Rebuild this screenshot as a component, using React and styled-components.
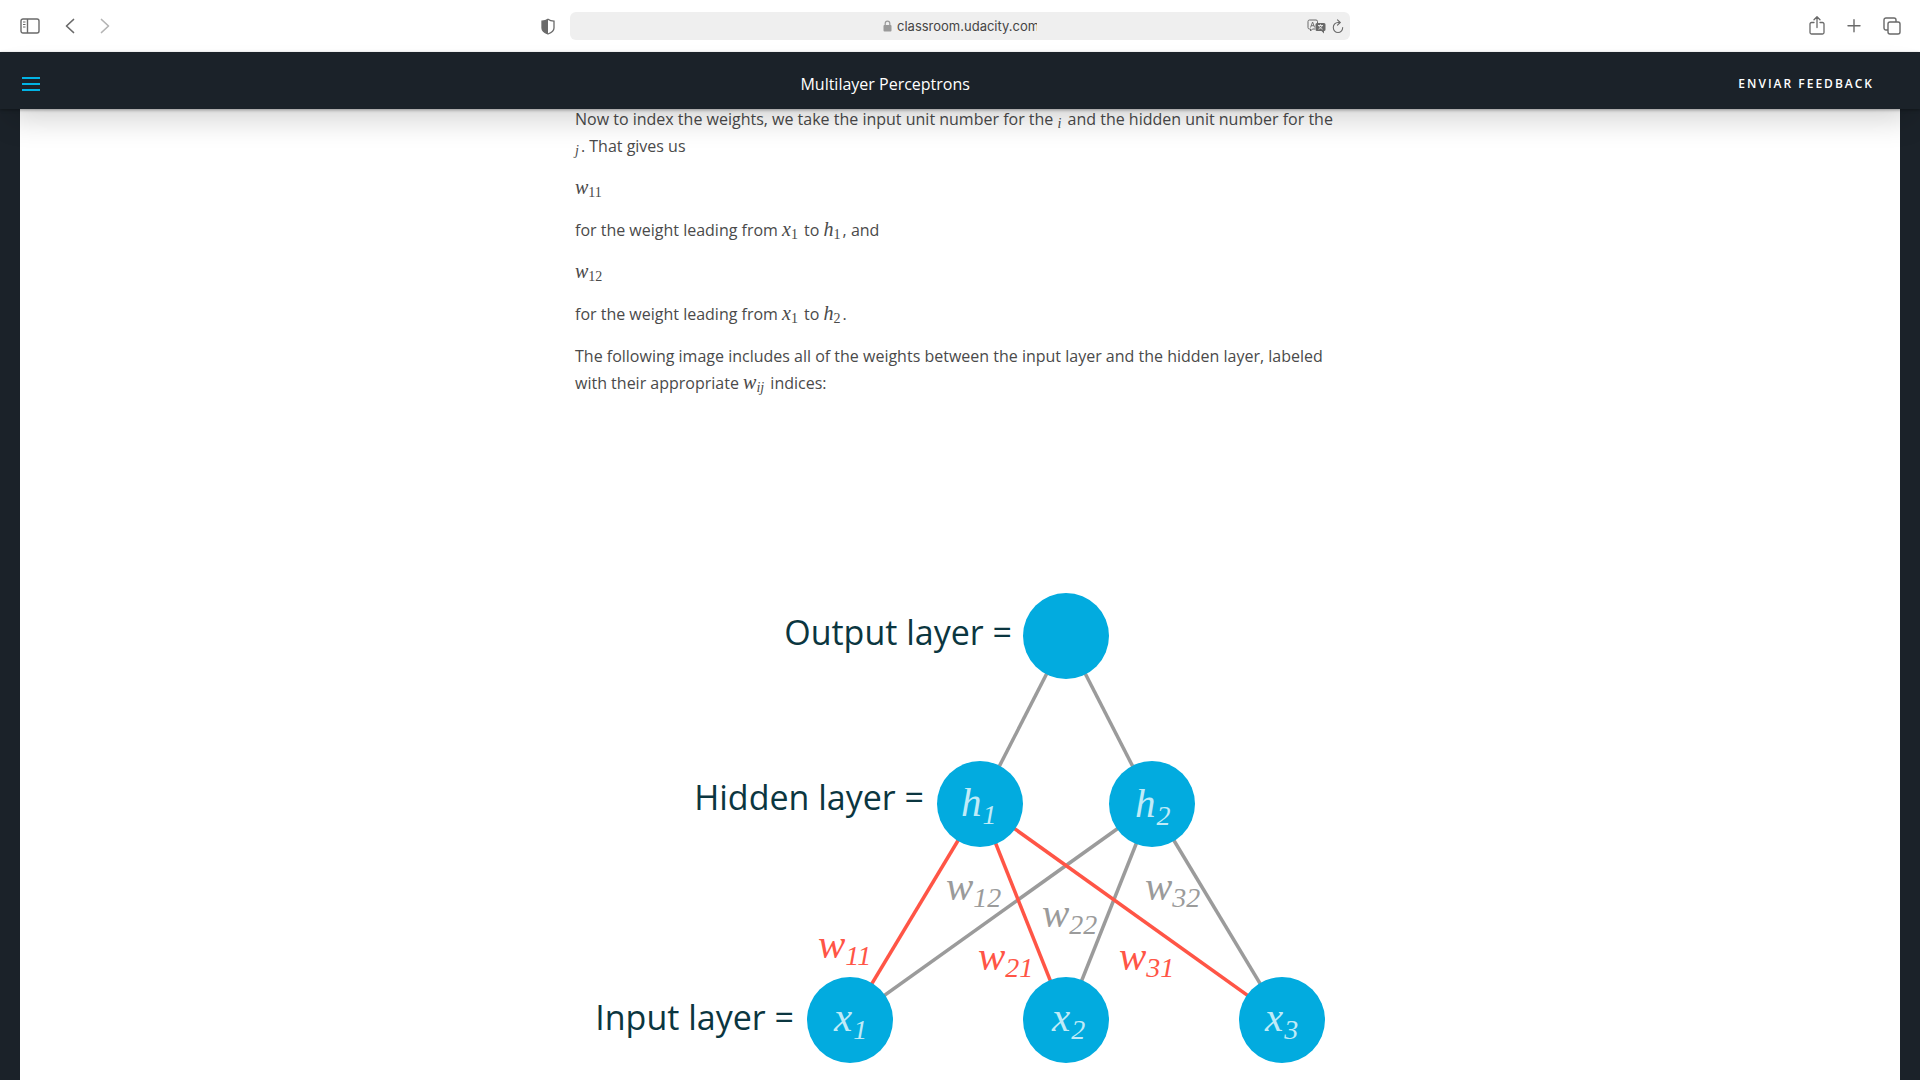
import React from "react";
import styled, { createGlobalStyle } from "styled-components";

const GlobalStyle = createGlobalStyle`
  *, *::before, *::after { box-sizing: border-box; }
  body {
    margin: 0;
    background: #1b2229;
    font-family: "Open Sans", "Noto Sans", sans-serif;
    overflow: hidden;
  }
`;

const Screen = styled.div`
  display: flex;
  flex-direction: column;
  height: 100vh;
`;

/* Browser toolbar */

const Toolbar = styled.div`
  display: grid;
  grid-template-columns: 1fr minmax(0, 780px) 1fr;
  align-items: center;
  flex: none;
  height: 52px;
  background: #fff;
`;

const ToolGroup = styled.div`
  display: flex;
  align-items: center;
  justify-content: ${(p) => p.$justify};
  gap: ${(p) => p.$gap}px;
  padding: 0 ${(p) => p.$padRight}px 0 ${(p) => p.$padLeft}px;
`;

const IconButton = styled.button`
  display: flex;
  padding: 0;
  border: 0;
  background: none;
  color: ${(p) => (p.$faded ? "#b4b4b4" : "#6a6a6a")};
  cursor: pointer;

  svg { display: block; }
`;

const AddressBar = styled.div`
  display: grid;
  grid-template-columns: 1fr auto 1fr;
  align-items: center;
  height: 28px;
  padding: 0 6px;
  border-radius: 6px;
  background: #efefef;
`;

const Address = styled.label`
  grid-column: 2;
  display: flex;
  align-items: center;
  gap: 5px;
  color: #9a9a9a;
`;

const AddressInput = styled.input`
  width: 140px;
  padding: 0;
  border: 0;
  outline: 0;
  background: none;
  color: #454545;
  font: 13px/20px Inter, Roboto, sans-serif;
`;

/* Classroom */

const Header = styled.header`
  position: relative;
  z-index: 1;
  display: flex;
  align-items: center;
  flex: none;
  height: 57px;
  padding: 6px 46px 0 22px;
  background: #1b2229;
  box-shadow: 0 1px 3px rgba(0, 0, 0, 0.35), 0 16px 32px -8px rgba(0, 0, 0, 0.2);
`;

const MenuButton = styled.button`
  display: flex;
  flex-direction: column;
  gap: 4px;
  width: 18px;
  padding: 0;
  border: 0;
  background: none;
  cursor: pointer;
`;

const MenuBar = styled.span`
  height: 2px;
  background: #02b3e4;
`;

const LessonTitle = styled.h1`
  flex: 1;
  margin: 0;
  padding-right: 8px;
  color: #fff;
  font-size: 16px;
  font-weight: 400;
  line-height: 24px;
  text-align: center;
`;

const FeedbackButton = styled.button`
  padding: 0;
  border: 0;
  background: none;
  color: #fff;
  font: 600 12px/24px "Open Sans", sans-serif;
  letter-spacing: 2px;
  cursor: pointer;
`;

const Page = styled.main`
  flex: 1;
  min-height: 0;
  margin: -3px 20px 0;
  background: #fff;
`;

const Article = styled.article`
  max-width: 770px;
  margin: 0 auto;
  color: #4a4a4a;
  font-size: 16px;
  line-height: 27px;
`;

const Paragraph = styled.p`
  margin: 0 0 15px;
`;

const Formula = styled.span`
  margin-right: 2px;
  font-family: "Liberation Serif", serif;
  font-size: 20px;
  font-style: italic;
  line-height: 1;
  white-space: nowrap;
`;

const Index = styled.sub`
  font-size: 14px;
  font-style: ${(p) => (p.$italic ? "italic" : "normal")};
  line-height: 1;
  vertical-align: -3px;
`;

const NoBreak = styled.span`
  white-space: nowrap;
`;

const Figure = styled.figure`
  margin: 0;

  svg { display: block; width: 100%; height: auto; }
`;

const LayerLabel = styled.text`
  fill: #0b3640;
  font-family: "Open Sans", sans-serif;
  font-size: 34px;
  text-anchor: end;
`;

const Symbol = styled.text`
  fill: ${(p) => p.$color};
  font-family: "Liberation Serif", serif;
  font-size: 41px;
  font-style: italic;
`;

const SymbolIndex = styled.tspan`
  font-size: 28px;
`;

const GREY = "#9b9b9b";
const RED = "#ff5546";
const BLUE = "#02abdf";
const PALE = "#c0ebf8";

const nodes = {
  out: { x: 491, y: 224 },
  h1: { x: 405, y: 392, name: "h", index: "1", tx: 386, ty: 404 },
  h2: { x: 577, y: 392, name: "h", index: "2", tx: 560, ty: 405 },
  x1: { x: 275, y: 608, name: "x", index: "1", tx: 259, ty: 619 },
  x2: { x: 491, y: 608, name: "x", index: "2", tx: 477, ty: 619 },
  x3: { x: 707, y: 608, name: "x", index: "3", tx: 690, ty: 619 },
};

const edges = [
  ["out", "h1", GREY],
  ["out", "h2", GREY],
  ["h2", "x1", GREY],
  ["h2", "x2", GREY],
  ["h2", "x3", GREY],
  ["h1", "x1", RED],
  ["h1", "x2", RED],
  ["h1", "x3", RED],
];

const weights = [
  { index: "12", x: 371, y: 488, color: GREY },
  { index: "22", x: 467, y: 515, color: GREY },
  { index: "32", x: 570, y: 488, color: GREY },
  { index: "11", x: 243, y: 546, color: RED },
  { index: "21", x: 403, y: 558, color: RED },
  { index: "31", x: 544, y: 558, color: RED },
];

const layers = [
  { label: "Output layer =", x: 437, y: 233 },
  { label: "Hidden layer =", x: 349, y: 398 },
  { label: "Input layer =", x: 219, y: 618 },
];

function Term({ name, index, italicIndex }) {
  return (
    <Formula>
      {name}
      <Index $italic={italicIndex}>{index}</Index>
    </Formula>
  );
}

function SidebarIcon() {
  return (
    <svg width="20" height="16" viewBox="0 0 20 16" fill="none" stroke="currentColor">
      <rect x="1" y="1" width="18" height="14" rx="2" strokeWidth="1.4" />
      <path d="M7.5 1v14" strokeWidth="1.4" />
      <path d="M3 4h2.500M3 6.500h2.500M3 9h2.500" strokeWidth="1" />
    </svg>
  );
}

function ChevronIcon({ forward }) {
  return (
    <svg width="10" height="16" viewBox="0 0 10 16" fill="none" stroke="currentColor" strokeWidth="1.700" strokeLinecap="round" strokeLinejoin="round">
      <path d={forward ? "M1.500 1.500L8.500 8L1.500 14.500" : "M8.500 1.500L1.500 8L8.500 14.500"} />
    </svg>
  );
}

function ShieldIcon() {
  return (
    <svg width="14" height="17" viewBox="0 0 14 17">
      <path d="M7 1.200C5.300 2.400 3.200 3 1 3.200V10c0 2.600 2.800 4.700 6 6c3.200-1.300 6-3.400 6-6V3.200C10.800 3 8.700 2.400 7 1.200Z" fill="none" stroke="currentColor" strokeWidth="1.300" />
      <path d="M7 1.200C5.300 2.400 3.200 3 1 3.200V10c0 2.600 2.800 4.700 6 6Z" fill="currentColor" />
    </svg>
  );
}

function LockIcon() {
  return (
    <svg width="9" height="12" viewBox="0 0 9 12">
      <path d="M2.200 6V3.400a2.300 2.300 0 0 1 4.600 0V6" fill="none" stroke="currentColor" strokeWidth="1.200" />
      <rect x="0.500" y="5" width="8" height="6.500" rx="1" fill="currentColor" />
    </svg>
  );
}

function TranslateIcon() {
  return (
    <svg width="19" height="15" viewBox="0 0 19 15">
      <path d="M8 10H5.500L3.500 12V10H2.500A1.500 1.500 0 0 1 1 8.500V2.500A1.500 1.500 0 0 1 2.500 1H9A1.500 1.500 0 0 1 10.500 2.500V4" fill="none" stroke="currentColor" />
      <path d="M10 4h7a1.500 1.500 0 0 1 1.500 1.500v5A1.500 1.500 0 0 1 17 12v2.500L14.500 12H10a1.500 1.500 0 0 1-1.500-1.500v-5A1.500 1.500 0 0 1 10 4Z" fill="currentColor" />
      <path d="M3.500 8.500L5.600 3L7.700 8.500M4.200 6.700H7" fill="none" stroke="currentColor" strokeWidth="0.900" />
      <path d="M11 6.500h5M13.500 5.300v1.200M12 6.800c.5 1.500 1.800 2.700 3.500 3.400M15 6.800c-.5 1.500-1.800 2.700-3.500 3.400" fill="none" stroke="#efefef" strokeWidth="0.900" />
    </svg>
  );
}

function ReloadIcon() {
  return (
    <svg width="12" height="15" viewBox="0 0 12 15" fill="none" stroke="currentColor" strokeWidth="1.100" strokeLinecap="round" strokeLinejoin="round">
      <path d="M10.700 8.500A4.700 5 0 1 1 6 3.500H8" />
      <path d="M5.500 0.800L8.200 3.500L5.500 6.200" />
    </svg>
  );
}

function ShareIcon() {
  return (
    <svg width="16" height="20" viewBox="0 0 16 20" fill="none" stroke="currentColor" strokeWidth="1.300" strokeLinecap="round" strokeLinejoin="round">
      <path d="M5 6.500H2.500A1.500 1.500 0 0 0 1 8v8.500A1.500 1.500 0 0 0 2.500 18h11a1.500 1.500 0 0 0 1.500-1.500V8A1.500 1.500 0 0 0 13.500 6.500H11" />
      <path d="M8 11.500V1M5 3.800L8 0.800L11 3.800" />
    </svg>
  );
}

function PlusIcon() {
  return (
    <svg width="14" height="14" viewBox="0 0 14 14" stroke="currentColor" strokeWidth="1.400" strokeLinecap="round">
      <path d="M7 0.700v12M1 6.700h12" />
    </svg>
  );
}

function TabsIcon() {
  return (
    <svg width="18" height="18" viewBox="0 0 18 18" fill="none" stroke="currentColor" strokeWidth="1.400">
      <rect x="5" y="5" width="12" height="12" rx="2" />
      <path d="M5 13H3A2 2 0 0 1 1 11V3A2 2 0 0 1 3 1H11A2 2 0 0 1 13 3V5" />
    </svg>
  );
}

function NetworkDiagram() {
  return (
    <svg viewBox="0 0 770 680" role="img" aria-label="Network with three input units, two hidden units and one output unit">
      {edges.map(([from, to, color]) => (
        <line
          key={from + to}
          x1={nodes[from].x}
          y1={nodes[from].y}
          x2={nodes[to].x}
          y2={nodes[to].y}
          stroke={color}
          strokeWidth="3.500"
        />
      ))}
      {Object.entries(nodes).map(([id, node]) => (
        <g key={id}>
          <circle cx={node.x} cy={node.y} r="43" fill={BLUE} />
          {node.name && (
            <Symbol x={node.tx} y={node.ty} $color={PALE}>
              {node.name}
              <SymbolIndex dx="1" dy="8">{node.index}</SymbolIndex>
            </Symbol>
          )}
        </g>
      ))}
      {weights.map((w) => (
        <Symbol key={w.index} x={w.x} y={w.y} $color={w.color}>
          w<SymbolIndex dy="7">{w.index}</SymbolIndex>
        </Symbol>
      ))}
      {layers.map((l) => (
        <LayerLabel key={l.label} x={l.x} y={l.y}>{l.label}</LayerLabel>
      ))}
    </svg>
  );
}

export default function App() {
  return (
    <Screen>
      <GlobalStyle />
      <Toolbar>
        <ToolGroup $justify="space-between" $gap={20} $padLeft={20} $padRight={15}>
          <ToolGroup $gap={25} $padLeft={0} $padRight={0}>
            <IconButton aria-label="Sidebar"><SidebarIcon /></IconButton>
            <IconButton aria-label="Back"><ChevronIcon /></IconButton>
            <IconButton aria-label="Forward" $faded><ChevronIcon forward /></IconButton>
          </ToolGroup>
          <IconButton aria-label="Privacy report"><ShieldIcon /></IconButton>
        </ToolGroup>
        <AddressBar>
          <Address>
            <LockIcon />
            <AddressInput aria-label="Address" defaultValue="classroom.udacity.com" />
          </Address>
          <ToolGroup $justify="flex-end" $gap={6} $padLeft={0} $padRight={0}>
            <IconButton aria-label="Translate"><TranslateIcon /></IconButton>
            <IconButton aria-label="Reload"><ReloadIcon /></IconButton>
          </ToolGroup>
        </AddressBar>
        <ToolGroup $justify="flex-end" $gap={22} $padLeft={0} $padRight={19}>
          <IconButton aria-label="Share"><ShareIcon /></IconButton>
          <IconButton aria-label="New tab"><PlusIcon /></IconButton>
          <IconButton aria-label="Tab overview"><TabsIcon /></IconButton>
        </ToolGroup>
      </Toolbar>
      <Header>
        <MenuButton aria-label="Menu">
          <MenuBar />
          <MenuBar />
          <MenuBar />
        </MenuButton>
        <LessonTitle>Multilayer Perceptrons</LessonTitle>
        <FeedbackButton>ENVIAR FEEDBACK</FeedbackButton>
      </Header>
      <Page>
        <Article>
          <Paragraph>
            Now to index the weights, we take the input unit number for the{" "}
            <Formula><Index $italic>i</Index></Formula> and the hidden unit number for the{" "}
            <NoBreak><Formula><Index $italic>j</Index></Formula>. That</NoBreak> gives us
          </Paragraph>
          <Paragraph><Term name="w" index="11" /></Paragraph>
          <Paragraph>
            for the weight leading from <Term name="x" index="1" /> to <Term name="h" index="1" />, and
          </Paragraph>
          <Paragraph><Term name="w" index="12" /></Paragraph>
          <Paragraph>
            for the weight leading from <Term name="x" index="1" /> to <Term name="h" index="2" />.
          </Paragraph>
          <Paragraph>
            The following image includes all of the weights between the input layer and the hidden layer, labeled
            with their appropriate <Term name="w" index="ij" italicIndex /> indices:
          </Paragraph>
          <Figure><NetworkDiagram /></Figure>
        </Article>
      </Page>
    </Screen>
  );
}
